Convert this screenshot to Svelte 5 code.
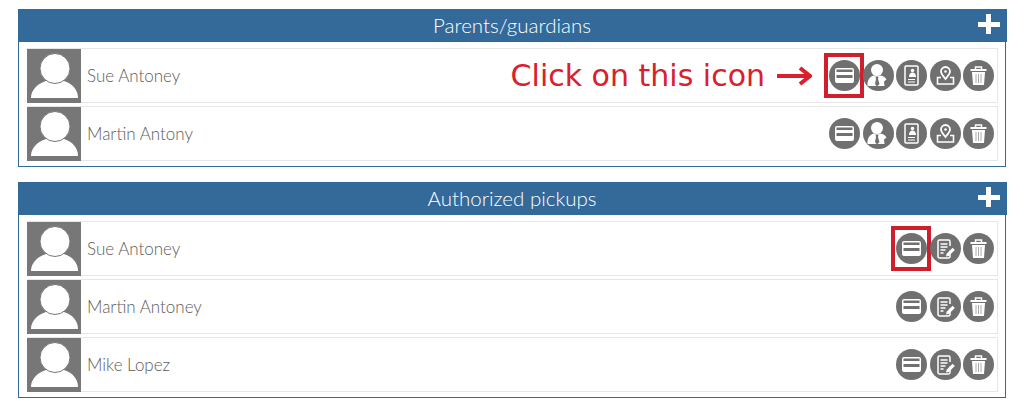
<script>
	const parents = [
		{ name: 'Sue Antoney', hint: true },
		{ name: 'Martin Antony', hint: false }
	];
	const pickups = [
		{ name: 'Sue Antoney', hint: true },
		{ name: 'Martin Antoney', hint: false },
		{ name: 'Mike Lopez', hint: false }
	];
</script>

{#snippet card()}
	<svg class="icon" viewBox="0 0 31 31">
		<circle cx="15.500" cy="15.500" r="15.500" fill="#707070" />
		<rect x="6" y="8" width="19" height="15" rx="2" fill="#fff" />
		<rect x="7.500" y="9.500" width="16" height="2.500" fill="#707070" />
		<rect x="7.500" y="15" width="16" height="3" fill="#707070" />
	</svg>
{/snippet}

{#snippet guardian()}
	<svg class="icon" viewBox="0 0 31 31">
		<circle cx="15.500" cy="15.500" r="15.500" fill="#707070" />
		<circle cx="14" cy="10" r="6" fill="#fff" />
		<path d="M4.500 26c-.5-6 2.500-10 7-10.500h5c3 0 5.500 1.500 7 4l-2.500 2 .5 4.500z" fill="#fff" />
		<path d="M12.500 16.500h3l-.5 2.500 1.500 5-2.500 2.500-2-2.500 1-5z" fill="#707070" />
	</svg>
{/snippet}

{#snippet badge()}
	<svg class="icon" viewBox="0 0 31 31">
		<circle cx="15.500" cy="15.500" r="15.500" fill="#707070" />
		<rect x="9" y="6" width="13" height="19" rx="1" fill="none" stroke="#fff" stroke-width="1.500" />
		<circle cx="16.500" cy="10.500" r="1.800" fill="#fff" />
		<path d="M13 17c0-3 1.500-4.500 3.500-4.500S20 14 20 17z" fill="#fff" />
		<path d="M12 19.500h7M12 22h7" stroke="#fff" stroke-width="1" />
	</svg>
{/snippet}

{#snippet pin()}
	<svg class="icon" viewBox="0 0 31 31">
		<circle cx="15.500" cy="15.500" r="15.500" fill="#707070" />
		<path d="M15.500 19c-3-3.500-4.500-5.500-4.500-7.500a4.500 4.500 0 0 1 9 0c0 2-1.500 4-4.500 7.500z" fill="none" stroke="#fff" stroke-width="1.800" />
		<circle cx="15.500" cy="11.500" r="1.300" fill="#fff" />
		<path d="M11 17.500H7.500v6.500h16v-6.500H20" fill="none" stroke="#fff" stroke-width="1.600" />
	</svg>
{/snippet}

{#snippet note()}
	<svg class="icon" viewBox="0 0 31 31">
		<circle cx="15.500" cy="15.500" r="15.500" fill="#707070" />
		<path d="M20 17.500v6a1.500 1.500 0 0 1-1.500 1.500h-9A1.500 1.500 0 0 1 8 23.500v-15A1.500 1.500 0 0 1 9.500 7h9A1.500 1.500 0 0 1 20 8.500V13" fill="none" stroke="#fff" stroke-width="1.500" />
		<path d="M10.500 11h7M10.500 14h7M10.500 17h5M10.500 20h3" stroke="#fff" stroke-width="1.300" />
		<path d="M16 23.500l.6-2.800 6-6 2.200 2.200-6 6z" fill="#fff" />
	</svg>
{/snippet}

{#snippet trash()}
	<svg class="icon" viewBox="0 0 31 31">
		<circle cx="15.500" cy="15.500" r="15.500" fill="#707070" />
		<path d="M7.500 10h16" stroke="#fff" stroke-width="2" />
		<path d="M12.500 9.500V7h6v2.500" fill="none" stroke="#fff" stroke-width="1.500" />
		<path d="M9 12h13l-1 13H10z" fill="#fff" />
		<path d="M13 14v9M15.500 14v9M18 14v9" stroke="#aaa" stroke-width="1" />
	</svg>
{/snippet}

{#snippet avatar()}
	<svg class="avatar" viewBox="0 0 54 54">
		<rect width="54" height="54" fill="#777" />
		<path d="M4 49c0-8 6-14 15-17h18c9 3 14 9 14 17z" fill="#fff" />
		<circle cx="28" cy="19.500" r="15" fill="#fff" stroke="#777" stroke-width="1" />
	</svg>
{/snippet}

{#snippet panel(title, people, actions)}
	<section class="panel">
		<header>
			<h2>{title}</h2>
			<span class="plus"></span>
		</header>
		<div class="rows">
			{#each people as person}
				<div class="row">
					{@render avatar()}
					<span class="name">{person.name}</span>
					{#if person.hint && actions.length > 3}
						<span class="hint">Click on this icon</span>
						<svg class="arrow" viewBox="0 0 36 20">
							<path d="M1 10h32M24 2l10 8-10 8" fill="none" stroke="#d9202c" stroke-width="4" />
						</svg>
					{/if}
					<div class="actions">
						{#each actions as action, i}
							<span class="action">
								{@render action()}
								{#if person.hint && i === 0}
									<span class="marker"></span>
								{/if}
							</span>
						{/each}
					</div>
				</div>
			{/each}
		</div>
	</section>
{/snippet}

<main>
	{@render panel('Parents/guardians', parents, [card, guardian, badge, pin, trash])}
	{@render panel('Authorized pickups', pickups, [card, note, trash])}
</main>

<style>
	:global(body) {
		background: #fff;
	}

	main {
		display: flex;
		flex-direction: column;
		gap: 15px;
		padding: 9px 18px 0 18px;
		font-family: Lato, "Open Sans", sans-serif;
	}

	.panel {
		border: 1.5px solid #346a9a;
		border-top: none;
		padding-bottom: 5px;
	}

	header {
		position: relative;
		display: flex;
		align-items: center;
		justify-content: center;
		box-sizing: border-box;
		height: 33px;
		padding-bottom: 2px;
		margin: 0 -1.5px;
		background: #346a9a;
	}

	h2 {
		margin: 0;
		font-size: 20.5px;
		font-weight: 300;
		color: #fff;
	}

	.plus {
		position: absolute;
		right: 7px;
		top: 5px;
		width: 22px;
		height: 20px;
		background:
			linear-gradient(#fff, #fff) center / 22px 5px no-repeat,
			linear-gradient(#fff, #fff) center / 5px 20px no-repeat;
	}

	.rows {
		display: flex;
		flex-direction: column;
		gap: 3px;
		padding: 6px 7px 0 8px;
	}

	.row {
		display: flex;
		align-items: center;
		box-sizing: border-box;
		height: 55px;
		border: 1px solid #e6e6e6;
		border-left: none;
	}

	.avatar {
		display: block;
		flex: none;
		width: 54px;
		height: 54px;
	}

	.name {
		margin-left: 6px;
		font-size: 17px;
		font-weight: 300;
		color: #5c5c5c;
	}

	.hint {
		margin-left: auto;
		font-family: "DejaVu Sans", sans-serif;
		font-size: 30px;
		color: #d9202c;
	}

	.arrow {
		flex: none;
		width: 36px;
		height: 20px;
		margin: 0 17px 0 11px;
	}

	.hint ~ .actions {
		margin-left: 0;
	}

	.actions {
		display: flex;
		gap: 2.500px;
		margin-left: auto;
		padding-right: 3px;
	}

	.action {
		position: relative;
		display: block;
		width: 31px;
		height: 31px;
	}

	.icon {
		display: block;
		width: 31px;
		height: 31px;
	}

	.marker {
		position: absolute;
		left: -5px;
		top: -7px;
		box-sizing: border-box;
		width: 40px;
		height: 45px;
		border: 4px solid #d01f2c;
	}
</style>
